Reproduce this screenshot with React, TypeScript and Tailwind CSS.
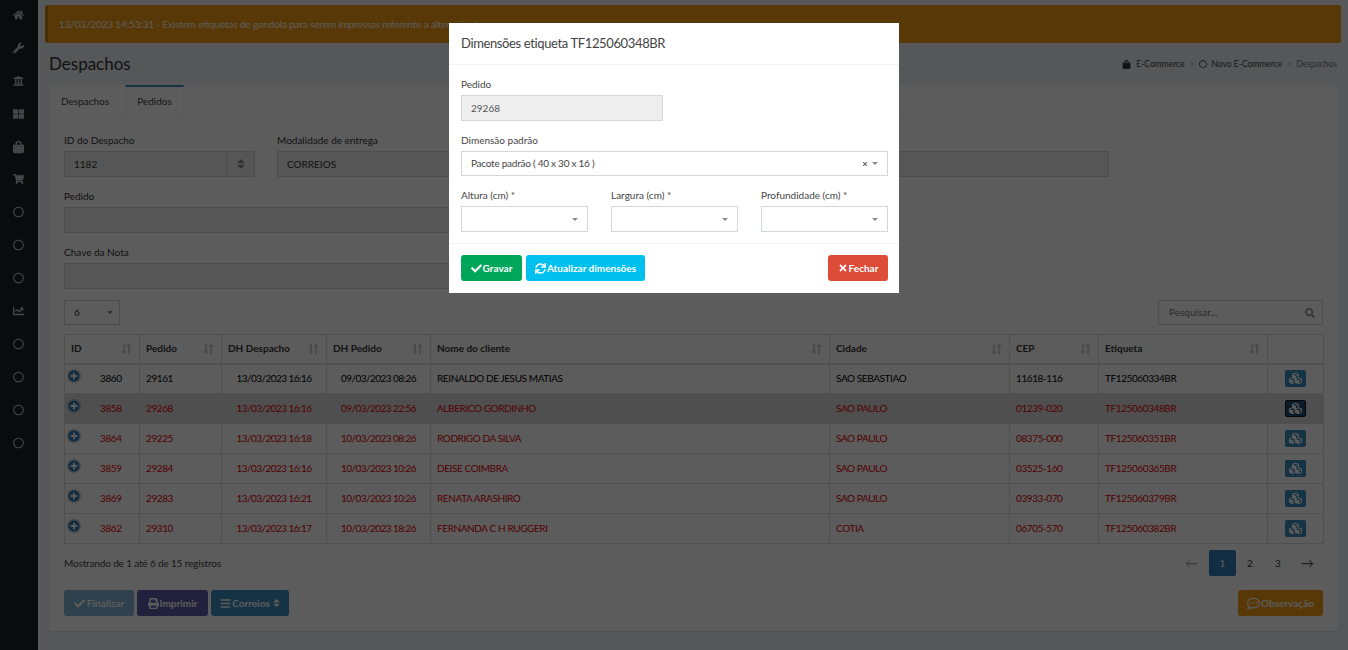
import {
  FaBars,
  FaChartLine,
  FaCheck,
  FaCubes,
  FaHome,
  FaLongArrowAltDown,
  FaLongArrowAltUp,
  FaPlusCircle,
  FaPrint,
  FaRegCircle,
  FaRegCommentDots,
  FaSearch,
  FaShoppingBag,
  FaShoppingCart,
  FaSort,
  FaSync,
  FaThLarge,
  FaTimes,
  FaUniversity,
  FaWrench,
} from 'react-icons/fa';

const sideIcons = [
  FaHome,
  FaWrench,
  FaUniversity,
  FaThLarge,
  FaShoppingBag,
  FaShoppingCart,
  FaRegCircle,
  FaRegCircle,
  FaRegCircle,
  FaChartLine,
  FaRegCircle,
  FaRegCircle,
  FaRegCircle,
  FaRegCircle,
];

const columns = [
  { label: 'ID', width: 'w-[75px]' },
  { label: 'Pedido', width: 'w-[82px]' },
  { label: 'DH Despacho', width: 'w-[105px]' },
  { label: 'DH Pedido', width: 'w-[104px]' },
  { label: 'Nome do cliente', width: 'w-[399px]' },
  { label: 'Cidade', width: 'w-[180px]' },
  { label: 'CEP', width: 'w-[89px]' },
  { label: 'Etiqueta', width: 'w-[169px]' },
];

const rows = [
  ['3860', '29161', '13/03/2023 16:16', '09/03/2023 08:26', 'REINALDO DE JESUS MATIAS', 'SAO SEBASTIAO', '11618-116', 'TF125060334BR'],
  ['3858', '29268', '13/03/2023 16:16', '09/03/2023 22:56', 'ALBERICO GORDINHO', 'SAO PAULO', '01239-020', 'TF125060348BR'],
  ['3864', '29225', '13/03/2023 16:18', '10/03/2023 08:26', 'RODRIGO DA SILVA', 'SAO PAULO', '08375-000', 'TF125060351BR'],
  ['3859', '29284', '13/03/2023 16:16', '10/03/2023 10:26', 'DEISE COIMBRA', 'SAO PAULO', '03525-160', 'TF125060365BR'],
  ['3869', '29283', '13/03/2023 16:21', '10/03/2023 10:26', 'RENATA ARASHIRO', 'SAO PAULO', '03933-070', 'TF125060379BR'],
  ['3862', '29310', '13/03/2023 16:17', '10/03/2023 18:26', 'FERNANDA C H RUGGERI', 'COTIA', '06705-570', 'TF125060382BR'],
];

function Caret() {
  return <span className="h-0 w-0 border-x-[3px] border-t-[3px] border-x-transparent border-t-[#888]" />;
}

function Field({ label, className, children }: { label: string; className: string; children?: React.ReactNode }) {
  return (
    <div className={className}>
      <div className="mb-[4px] h-[14px] text-[10px] leading-[14px] text-[#333]">{label}</div>
      {children ?? <div className="h-[26px] border border-[#d2d6de] bg-[#eee]" />}
    </div>
  );
}

function EmptySelect({ label }: { label: string }) {
  return (
    <div className="w-[127px]">
      <div className="mb-[4px] h-[14px] text-[10px] leading-[14px] text-[#444]">{label}</div>
      <div className="flex h-[26px] items-center justify-end border border-[#d2d6de] bg-white pr-[9px]">
        <Caret />
      </div>
    </div>
  );
}

export default function App() {
  return (
    <div className="relative flex h-[650px] w-[1348px] overflow-hidden bg-[#ecf0f5] font-['Lato',sans-serif] text-[#333]">
      {/* Sidebar */}
      <aside className="flex w-[38px] shrink-0 flex-col items-center gap-[16.9px] bg-[#1a2226] pt-[7px] text-[#b8c7ce]">
        {sideIcons.map((Icon, i) => (
          <Icon key={i} className="h-[16px] w-[11px] shrink-0 -translate-x-[1px]" />
        ))}
      </aside>

      <main className="min-w-0 flex-1 pt-[5px]">
        {/* Alert */}
        <div className="mx-[7px] flex h-[38px] items-center rounded-[3px] border-l-[3px] border-[#c87f0a] bg-[#f39c12] pl-[11px] text-[10px] tracking-[-0.15px] text-white">
          13/03/2023 14:53:31 - Existem etiquetas de gondola para serem impressas referente a alteração de preço
        </div>

        {/* Title */}
        <div className="mx-[11px] mt-[10px] flex h-[22px] items-center justify-between">
          <h1 className="text-[17px] leading-[22px]">Despachos</h1>
          <div className="flex items-center text-[8.5px] text-[#444]">
            <FaShoppingBag className="mr-[5px] h-[9px] w-[9px] text-[#333]" />
            E-Commerce
            <span className="mx-[4.5px] text-[#aaa]">&gt;</span>
            <FaRegCircle className="mr-[5px] h-[8px] w-[8px] text-[#333]" />
            Novo E-Commerce
            <span className="mx-[4.5px] text-[#aaa]">&gt;</span>
            <span className="text-[#777]">Despachos</span>
          </div>
        </div>

        {/* Card */}
        <section className="ml-[11px] mt-[10px] h-[546px] w-[1289px] rounded-[3px] bg-white shadow-[0_1px_1px_rgba(0,0,0,0.1)]">
          <div className="flex h-[32px] border-b border-[#f4f4f4] text-[10px] text-[#444]">
            <div className="flex w-[76px] items-center pl-[12px] pt-[2px]">Despachos</div>
            <div className="flex w-[59px] items-center justify-center border-x border-t-[2px] border-x-[#f4f4f4] border-t-[#3c8dbc]">Pedidos</div>
          </div>

          <div className="px-[15px] pt-[16px]">
            <div className="flex gap-[22px]">
              <Field label="ID do Despacho" className="w-[191px]">
                <div className="flex h-[26px] border border-[#d2d6de] bg-[#eee] text-[10px]">
                  <div className="flex flex-1 items-center pl-[9px]">1182</div>
                  <div className="flex w-[28px] items-center justify-center border-l border-[#d2d6de] text-[#888]">
                    <FaSort className="h-[12px] w-[12px]" />
                  </div>
                </div>
              </Field>
              <Field label="Modalidade de entrega" className="w-[832px]">
                <div className="flex h-[26px] items-center border border-[#d2d6de] bg-[#eee] pl-[9px] text-[10px]">CORREIOS</div>
              </Field>
            </div>
            <Field label="Pedido" className="mt-[12px] w-[622px]" />
            <Field label="Chave da Nota" className="mt-[12px] w-[622px]" />

            <div className="mt-[11px] flex justify-between">
              <div className="flex h-[25px] w-[56px] items-center justify-between border border-[#d2d6de] pl-[9px] pr-[6px] text-[10px]">
                6
                <Caret />
              </div>
              <div className="flex h-[25px] w-[165px] items-center justify-between border border-[#d2d6de] pl-[10px] pr-[7px] text-[10px] text-[#777]">
                Pesquisar...
                <FaSearch className="h-[10px] w-[10px] text-[#888]" />
              </div>
            </div>

            {/* Table */}
            <table className="mt-[9px] w-[1259px] table-fixed border-collapse text-[10px]">
              <colgroup>
                {columns.map((c) => (
                  <col key={c.label} className={c.width} />
                ))}
                <col className="w-[56px]" />
              </colgroup>
              <thead>
                <tr className="h-[29px] border-b-[2px] border-[#ddd]">
                  {columns.map((c) => (
                    <th key={c.label} className="border border-[#ddd] px-[6px] text-left font-bold text-[#333]">
                      <div className="flex items-center justify-between">
                        {c.label}
                        <span className="flex text-[#ccc]">
                          <FaLongArrowAltDown className="-mr-[3px] h-[12px] w-[8px]" />
                          <FaLongArrowAltUp className="h-[12px] w-[8px]" />
                        </span>
                      </div>
                    </th>
                  ))}
                  <th className="border border-[#ddd]" />
                </tr>
              </thead>
              <tbody>
                {rows.map((r, i) => (
                  <tr key={r[0]} className={`h-[30px] ${i === 1 ? 'bg-[#dcdcdc]' : ''} ${i === 0 ? 'text-black' : 'text-[#e00000]'}`}>
                    {r.map((cell, j) => (
                      <td
                        key={j}
                        className={`border border-[#ddd] px-[6px] font-normal ${i === 1 ? 'border-y-transparent' : ''} ${
                          j === 2 || j === 3 ? 'text-center tracking-[-0.55px]' : 'tracking-[-0.4px]'
                        }`}
                      >
                        {j === 0 ? (
                          <div className="flex items-center">
                            <FaPlusCircle className="-ml-[3px] -mt-[5px] h-[12px] w-[12px] rounded-full bg-white text-[#337ab7] shadow-[0_0_2px_#444]" />
                            <span className="ml-[20px]">{cell}</span>
                          </div>
                        ) : (
                          cell
                        )}
                      </td>
                    ))}
                    <td className={`border border-[#ddd] pr-[1px] ${i === 1 ? 'border-y-transparent' : ''}`}>
                      <div
                        className={`mx-auto flex h-[17px] w-[21px] items-center justify-center rounded-[2px] text-white ${
                          i === 1 ? 'border border-[#111] bg-[#204d74]' : 'bg-[#3c8dbc]'
                        }`}
                      >
                        <FaCubes className="h-[13px] w-[13px]" />
                      </div>
                    </td>
                  </tr>
                ))}
              </tbody>
            </table>

            <div className="mt-[6px] flex h-[26px] items-center justify-between text-[10px]">
              <span className="tracking-[-0.15px] text-[#444]">Mostrando de 1 até 6 de 15 registros</span>
              <div className="flex items-center">
                <span className="mr-[11px] text-[13px] leading-none text-[#aaa]">←</span>
                <span className="flex h-[26px] w-[27px] items-center justify-center rounded-[2px] bg-[#337ab7] text-white">1</span>
                <span className="flex w-[28px] justify-center">2</span>
                <span className="flex w-[28px] justify-center">3</span>
                <span className="ml-[9px] mr-[9px] text-[13px] leading-none text-[#555]">→</span>
              </div>
            </div>
          </div>

          {/* Footer */}
          <div className="mx-[5px] mt-[5px] flex justify-between border-t border-[#f4f4f4] px-[10px] pt-[8px] text-[10px] font-bold text-white">
            <div className="flex gap-[3px]">
              <button className="flex h-[26px] w-[70px] items-center justify-center gap-[2px] rounded-[3px] bg-[#3c8dbc] opacity-65">
                <FaCheck className="h-[11px] w-[11px]" />
                Finalizar
              </button>
              <button className="flex h-[26px] w-[71px] items-center justify-center gap-[1px] rounded-[3px] bg-[#605ca8]">
                <FaPrint className="h-[11px] w-[11px]" />
                Imprimir
              </button>
              <button className="flex h-[26px] w-[78px] items-center justify-center gap-[1px] rounded-[3px] bg-[#3c8dbc]">
                <FaBars className="h-[11px] w-[11px]" />
                Correios
                <FaSort className="ml-[2px] h-[10px] w-[7px]" />
              </button>
            </div>
            <button className="flex h-[26px] w-[85px] items-center justify-center gap-[1px] rounded-[3px] bg-[#f39c12]">
              <FaRegCommentDots className="h-[13px] w-[13px]" />
              Observação
            </button>
          </div>
        </section>
      </main>

      {/* Dim layer and dialog */}
      <div className="absolute inset-0 bg-black/64">
        <div className="ml-[449px] mt-[23px] w-[450px] bg-white text-[#444]">
          <div className="flex h-[42px] items-center border-b border-[#f4f4f4] pl-[12px] text-[13px] tracking-[-0.37px]">Dimensões etiqueta TF125060348BR</div>
          <div className="h-[178px] pl-[12px] pr-[11px] pt-[12px]">
            <div className="mb-[4px] h-[14px] text-[10px] leading-[14px]">Pedido</div>
            <div className="flex h-[26px] w-[202px] items-center border border-[#d2d6de] bg-[#eee] pl-[9px] text-[10px] text-[#555]">29268</div>
            <div className="mb-[4px] mt-[12px] h-[14px] text-[10px] leading-[14px]">Dimensão padrão</div>
            <div className="flex h-[25px] items-center justify-between border border-[#d2d6de] pl-[9px] pr-[9px] text-[10px] tracking-[-0.25px]">
              Pacote padrão ( 40 x 30 x 16 )
              <span className="flex items-center gap-[4px]">
                <FaTimes className="h-[6px] w-[6px] text-[#666]" />
                <Caret />
              </span>
            </div>
            <div className="mt-[12px] flex justify-between">
              <EmptySelect label="Altura (cm) *" />
              <EmptySelect label="Largura (cm) *" />
              <EmptySelect label="Profundidade (cm) *" />
            </div>
          </div>
          <div className="flex h-[50px] justify-between border-t border-[#f4f4f4] pl-[12px] pr-[11px] pt-[11px] text-[10px] font-bold text-white">
            <div className="flex gap-[4px]">
              <button className="flex h-[26px] w-[61px] items-center justify-center gap-[1px] rounded-[3px] bg-[#00a65a]">
                <FaCheck className="h-[11px] w-[11px]" />
                Gravar
              </button>
              <button className="flex h-[26px] w-[119px] items-center justify-center gap-[1px] rounded-[3px] bg-[#00c0ef]">
                <FaSync className="h-[11px] w-[11px]" />
                Atualizar dimensões
              </button>
            </div>
            <button className="flex h-[26px] w-[60px] items-center justify-center gap-[1px] rounded-[3px] bg-[#dd4b39]">
              <FaTimes className="h-[10px] w-[10px]" />
              Fechar
            </button>
          </div>
        </div>
      </div>
    </div>
  );
}
